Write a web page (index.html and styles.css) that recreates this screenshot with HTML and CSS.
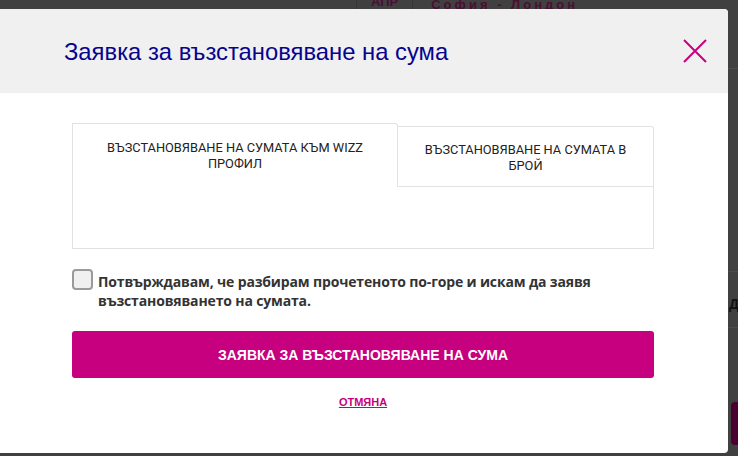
FILE: index.html
```html
<!DOCTYPE html>
<html lang="bg">
<head>
    <meta charset="UTF-8">
    <meta name="viewport" content="width=device-width, initial-scale=1.0">
    <title>Заявка за възстановяване на сума</title>
    <link rel="stylesheet" href="styles.css">
</head>
<body>

    <!-- Page behind the overlay -->
    <div class="backdrop">
        <div class="bg-top">
            <span class="bg-cell bg-month">АПР</span>
            <span class="bg-city">София - Лондон</span>
        </div>
        <div class="bg-line bg-line-1"></div>
        <div class="bg-line bg-line-2"></div>
        <div class="bg-line bg-line-3"></div>
        <span class="bg-text">ДА</span>
        <div class="bg-button"></div>
    </div>

    <!-- Refund modal -->
    <div class="modal">
        <div class="modal-header">
            <h1>Заявка за възстановяване на сума</h1>
            <button class="close-button" aria-label="Затвори">
                <svg width="24" height="24" viewBox="0 0 24 24">
                    <path d="M1 1 L23 23 M23 1 L1 23" stroke="#c6007e" stroke-width="2" fill="none"/>
                </svg>
            </button>
        </div>

        <div class="modal-body">
            <div class="tabs">
                <div class="tab tab-active">ВЪЗСТАНОВЯВАНЕ НА СУМАТА КЪМ WIZZ ПРОФИЛ</div>
                <div class="tab">ВЪЗСТАНОВЯВАНЕ НА СУМАТА В БРОЙ</div>
            </div>
            <div class="tab-panel"></div>

            <label class="confirm">
                <input type="checkbox" class="confirm-box">
                <span>Потвърждавам, че разбирам прочетеното по-горе и искам да заявя възстановяването на сумата.</span>
            </label>

            <button class="submit-button">Заявка за възстановяване на сума</button>
            <a href="#" class="cancel-link">Отмяна</a>
        </div>
    </div>

</body>
</html>
```

FILE: styles.css
```css
body {
    margin: 0;
    width: 738px;
    height: 456px;
    overflow: hidden;
    background-color: #404040;
    font-family: "Liberation Sans", Arial, sans-serif;
    position: relative;
}

/* Page behind the overlay */
.backdrop {
    position: absolute;
    inset: 0;
}

.bg-top {
    position: absolute;
    top: -4px;
    left: 356px;
    display: flex;
    align-items: center;
    height: 16px;
    font-size: 13px;
    font-weight: bold;
    color: #4a0f33;
}

.bg-cell {
    border-left: 1px solid #363636;
    border-right: 1px solid #363636;
    padding: 0 14px;
    height: 24px;
    line-height: 20px;
}

.bg-city {
    padding-left: 18px;
    letter-spacing: 3px;
}

.bg-line {
    position: absolute;
    left: 728px;
    width: 10px;
    height: 1px;
    background: #4c4c4c;
}

.bg-line-1 { top: 68px; }
.bg-line-2 { top: 271px; }
.bg-line-3 { top: 327px; }

.bg-text {
    position: absolute;
    left: 729px;
    top: 296px;
    font-size: 14px;
    font-weight: bold;
    color: #111;
}

.bg-button {
    position: absolute;
    left: 731px;
    top: 402px;
    width: 20px;
    height: 43px;
    border-radius: 4px;
    background: #4a0030;
}

/* Modal */
.modal {
    position: absolute;
    top: 9px;
    left: 0;
    width: 728px;
    height: 444px;
    background: #ffffff;
    border-radius: 0 4px 4px 0;
    overflow: hidden;
}

.modal-header {
    height: 84px;
    background: #f0f0f0;
    display: flex;
    align-items: center;
    justify-content: space-between;
    padding: 0 21px 0 64px;
}

.modal-header h1 {
    margin: 2px 0 0;
    font-size: 23.8px;
    font-weight: normal;
    color: #06038d;
}

.close-button {
    background: none;
    border: none;
    padding: 0;
    width: 24px;
    height: 24px;
    cursor: pointer;
}

.close-button svg {
    display: block;
}

.modal-body {
    padding: 30px 74px 0 72px;
    display: flex;
    flex-direction: column;
}

/* Tabs */
.tabs {
    display: flex;
    align-items: flex-end;
}

.tab {
    box-sizing: border-box;
    border: 1px solid #e2e2e2;
    border-left: none;
    border-top-right-radius: 3px;
    width: 256px;
    height: 61px;
    padding: 15px 24px 0;
    font-family: Roboto, "Liberation Sans", sans-serif;
    font-size: 12.8px;
    line-height: 16px;
    color: #222;
    text-align: center;
}

.tab-active {
    border-left: 1px solid #e2e2e2;
    border-bottom: none;
    width: 326px;
    height: 64px;
    padding: 16px 30px 0;
    background: #fff;
}

.tab-panel {
    height: 61px;
    border: 1px solid #e2e2e2;
    border-top: none;
}

/* Confirmation checkbox */
.confirm {
    display: flex;
    align-items: flex-start;
    gap: 5px;
    margin-top: 20px;
    font-family: "Open Sans", sans-serif;
    font-size: 14px;
    font-weight: bold;
    line-height: 19px;
    color: #333;
    letter-spacing: -0.15px;
    cursor: pointer;
}

.confirm-box {
    appearance: none;
    flex: none;
    box-sizing: border-box;
    width: 21px;
    height: 21px;
    margin: 0;
    border: 2px solid #9a9a9a;
    border-radius: 4px;
    background: #f0f0f0;
}

.confirm span {
    margin-top: 3px;
    padding-right: 40px;
}

/* Actions */
.submit-button {
    margin-top: 21px;
    height: 47px;
    border: none;
    border-radius: 3px;
    background-color: #c6007e;
    color: #ffffff;
    font-family: "Liberation Sans", Arial, sans-serif;
    font-size: 14px;
    font-weight: bold;
    text-transform: uppercase;
    cursor: pointer;
}

.submit-button:hover {
    background-color: #b00070;
}

.cancel-link {
    align-self: center;
    margin-top: 18px;
    font-size: 11px;
    font-weight: bold;
    color: #c6007e;
    text-transform: uppercase;
}
```
